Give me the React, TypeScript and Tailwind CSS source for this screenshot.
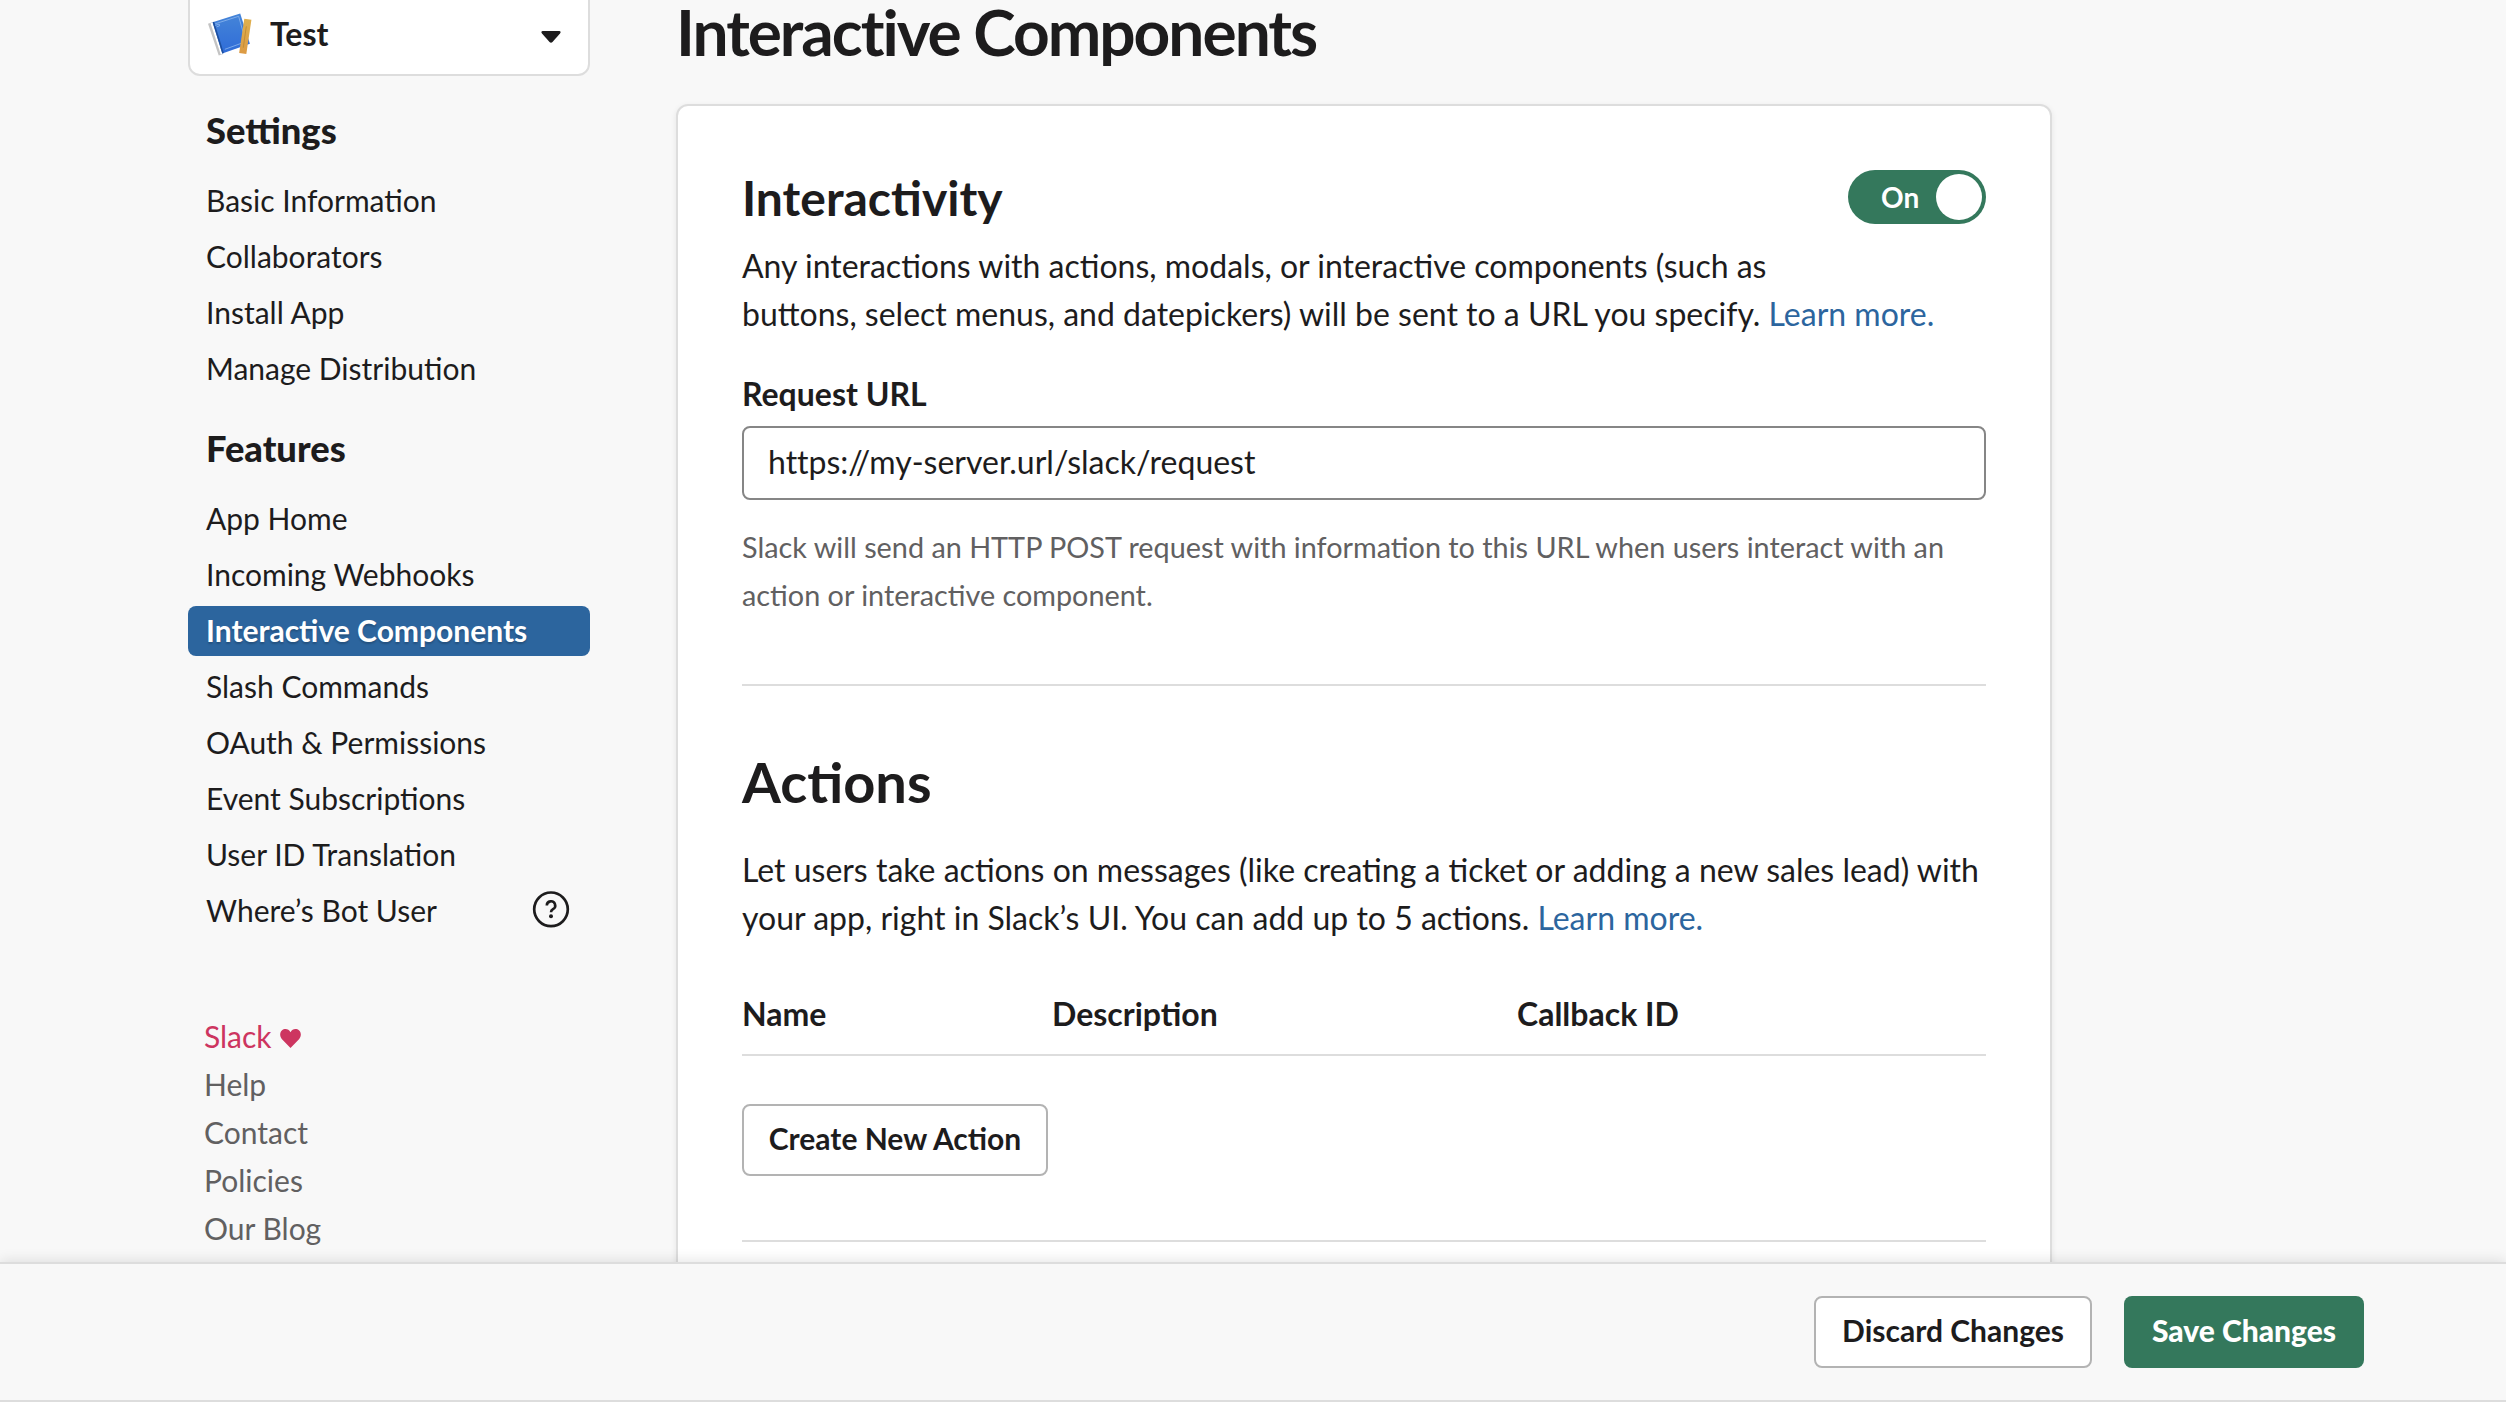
import React from "react";

const settings = ["Basic Information", "Collaborators", "Install App", "Manage Distribution"];
const features = [
  "App Home",
  "Incoming Webhooks",
  "Interactive Components",
  "Slash Commands",
  "OAuth & Permissions",
  "Event Subscriptions",
  "User ID Translation",
  "Where’s Bot User",
];

function AppIcon() {
  return (
    <svg width="47" height="47" viewBox="2 0 46 46" className="mt-px -mr-px">
      <defs>
        <linearGradient id="cover" x1="0" y1="0" x2="0" y2="1">
          <stop offset="0" stopColor="#4585d8" />
          <stop offset="1" stopColor="#2f6cd8" />
        </linearGradient>
        <linearGradient id="ruler" x1="0" y1="0" x2="0" y2="1">
          <stop offset="0" stopColor="#dfb04e" />
          <stop offset="1" stopColor="#dc9a43" />
        </linearGradient>
      </defs>
      <path d="M2 12.500L6 11L17 42L12.500 43.500Z" fill="#c4c4c4" />
      <path d="M4.500 12L7 11L18 41L14.500 42.500Z" fill="#fff" />
      <path d="M6.500 11L33.500 2.500L43 32L16 41.500Z" fill="url(#cover)" />
      <path d="M6.500 11L8 10.500L17.500 41L16 41.500Z" fill="#1d4f9f" />
      <path d="M9 12.500L32 5.200L39 30L18.500 37.500" fill="none" stroke="#8bb5ee" strokeWidth="0.800" />
      <path d="M9 14L13 12.800L13.300 14.500L10.500 15.500" fill="none" stroke="#8bb5ee" strokeWidth="0.800" />
      <path d="M37.500 7.500L44.500 8.500L39.500 42L32.500 41Z" fill="url(#ruler)" />
      <path d="M39.500 15L36.500 36" stroke="#c08a34" strokeWidth="0.900" />
    </svg>
  );
}

function NavSection({ title, items, active }: { title: string; items: string[]; active?: string }) {
  return (
    <section>
      <h3 className="px-[18px] text-[36.3px] leading-[48px] font-black">{title}</h3>
      <ul className="mt-[22px] flex flex-col gap-[6px]">
        {items.map((item) => (
          <li
            key={item}
            className={
              item === active
                ? "flex h-[50px] items-center rounded-[8px] bg-[#2c659e] px-[18px] pb-[2px] text-[30px] font-bold text-white [text-shadow:0_2px_2px_rgba(0,0,0,0.2)]"
                : "flex h-[50px] items-center justify-between px-[18px] pb-[2px] text-[30px]"
            }
          >
            {item}
            {item === "Where’s Bot User" && (
              <svg width="40" height="40" viewBox="0 0 40 40" fill="none" stroke="#1d1c1d" className="mr-[1px]">
                <circle cx="20" cy="19.300" r="16.800" strokeWidth="2.700" />
                <path d="M15.800 15.500a4.200 4.200 0 1 1 6.200 3.700c-1.500.9-2 1.600-2 3" strokeWidth="2.600" />
                <circle cx="20" cy="26.200" r="2" fill="#1d1c1d" stroke="none" />
              </svg>
            )}
          </li>
        ))}
      </ul>
    </section>
  );
}

export default function App() {
  return (
    <div className="flex h-[1402px] w-[2506px] flex-col overflow-hidden bg-[#f8f8f8] font-['Lato',sans-serif] text-[#1d1c1d]">
      <div className="flex min-h-0 flex-1 items-start overflow-hidden pl-[188px]">
        <aside className="flex w-[402px] flex-col">
          <div className="-mt-[20px] flex h-[96px] items-center rounded-[12px] border-2 border-[#dddddd] bg-white pt-[11px] pr-[27px] pl-[18px]">
            <AppIcon />
            <span className="ml-[16px] flex-1 text-[32px] leading-[48px] font-bold">Test</span>
            <svg width="20" height="12" viewBox="0 0 20 12" className="mt-[7px]">
              <path d="M1.500 0H18.500Q20.500 .5 19 2.500L11.500 11Q10 12.600 8.500 11L1 2.500Q-.5 .5 1.500 0Z" fill="#1d1c1d" />
            </svg>
          </div>
          <div className="mt-[30px] flex flex-col gap-[30px]">
            <NavSection title="Settings" items={settings} />
            <NavSection title="Features" items={features} active="Interactive Components" />
          </div>
          <ul className="mt-[76px] px-[16px] text-[30px] leading-[48px] text-[#616061]">
            <li className="flex items-center text-[#cd3560]">
              Slack
              <svg width="21" height="19" viewBox="0 0 22 20" className="mt-[5px] ml-[8px]">
                <path d="M11 20L1.800 10.400C-.6 7.600-.3 3.600 1.900 1.600C4.600-.8 9-.5 11 3.400C13-.5 17.400-.8 20.100 1.600C22.300 3.600 22.600 7.600 20.200 10.400Z" fill="#cd3560" />
              </svg>
            </li>
            <li>Help</li>
            <li>Contact</li>
            <li>Policies</li>
            <li>Our Blog</li>
          </ul>
        </aside>

        <main className="ml-[86px] w-[1376px]">
          <h1 className="-mt-[2px] text-[64px] leading-[68px] font-bold tracking-[-2px]">Interactive Components</h1>
          <div className="mt-[38px] h-[1300px] rounded-[12px] border-2 border-[#dddddd] bg-white px-[64px] pt-[60px] shadow-[0_2px_6px_rgba(0,0,0,0.08)]">
            <div className="flex items-start justify-between">
              <h2 className="text-[48px] leading-[64px] font-bold">Interactivity</h2>
              <div className="mt-[4px] flex h-[54px] w-[138px] items-center justify-between rounded-full bg-[#34785c] pr-[4px] pl-[33px] text-[28px] font-bold text-white">
                On
                <span className="size-[46px] rounded-full bg-white" />
              </div>
            </div>
            <p className="mt-[12px] text-[32px] leading-[48px]">
              Any interactions with actions, modals, or interactive components (such as
              <br />
              buttons, select menus, and datepickers) will be sent to a URL you specify.{" "}
              <a className="text-[#2c659e]">Learn more.</a>
            </p>
            <label className="mt-[32px] block text-[32px] leading-[48px] font-bold">Request URL</label>
            <div className="mt-[8px] flex h-[74px] items-center rounded-[8px] border-2 border-[#868686] px-[24px] pb-[2px] text-[32px] [font-variant-ligatures:none]">
              https://my-server.url/slack/request
            </div>
            <p className="mt-[23px] text-[28.8px] leading-[48px] text-[#616061]">
              Slack will send an HTTP POST request with information to this URL when users interact with an
              <br />
              action or interactive component.
            </p>
            <hr className="mt-[65px] border-t-2 border-[#dddddd]" />
            <h2 className="mt-[62px] text-[56px] leading-[68px] font-bold">Actions</h2>
            <p className="mt-[30px] text-[32px] leading-[48px]">
              Let users take actions on messages (like creating a ticket or adding a new sales lead) with
              <br />
              your app, right in Slack’s UI. You can add up to 5 actions. <a className="text-[#2c659e]">Learn more.</a>
            </p>
            <div className="mt-[48px] grid grid-cols-[310px_465px_1fr] border-b-2 border-[#dddddd] pb-[16px] text-[32px] leading-[48px] font-bold">
              <span>Name</span>
              <span>Description</span>
              <span>Callback ID</span>
            </div>
            <button className="mt-[48px] flex h-[72px] w-[306px] items-center justify-center rounded-[8px] border-2 border-[#b3b3b3] pb-[4px] text-[30px] font-bold">
              Create New Action
            </button>
            <hr className="mt-[64px] border-t-2 border-[#dddddd]" />
          </div>
        </main>
      </div>

      <footer className="z-10 flex h-[140px] shrink-0 items-center justify-end gap-[32px] border-y-2 border-[#dddddd] bg-[#f8f8f8] pr-[142px] text-[30px] shadow-[0_-2px_12px_rgba(0,0,0,0.1)]">
        <button className="flex h-[72px] w-[278px] items-center justify-center rounded-[8px] border-2 border-[#b3b3b3] bg-white pb-[4px] font-bold">
          Discard Changes
        </button>
        <button className="flex h-[72px] w-[240px] items-center justify-center rounded-[8px] bg-[#34785c] pb-[4px] font-black text-white">
          Save Changes
        </button>
      </footer>
    </div>
  );
}
